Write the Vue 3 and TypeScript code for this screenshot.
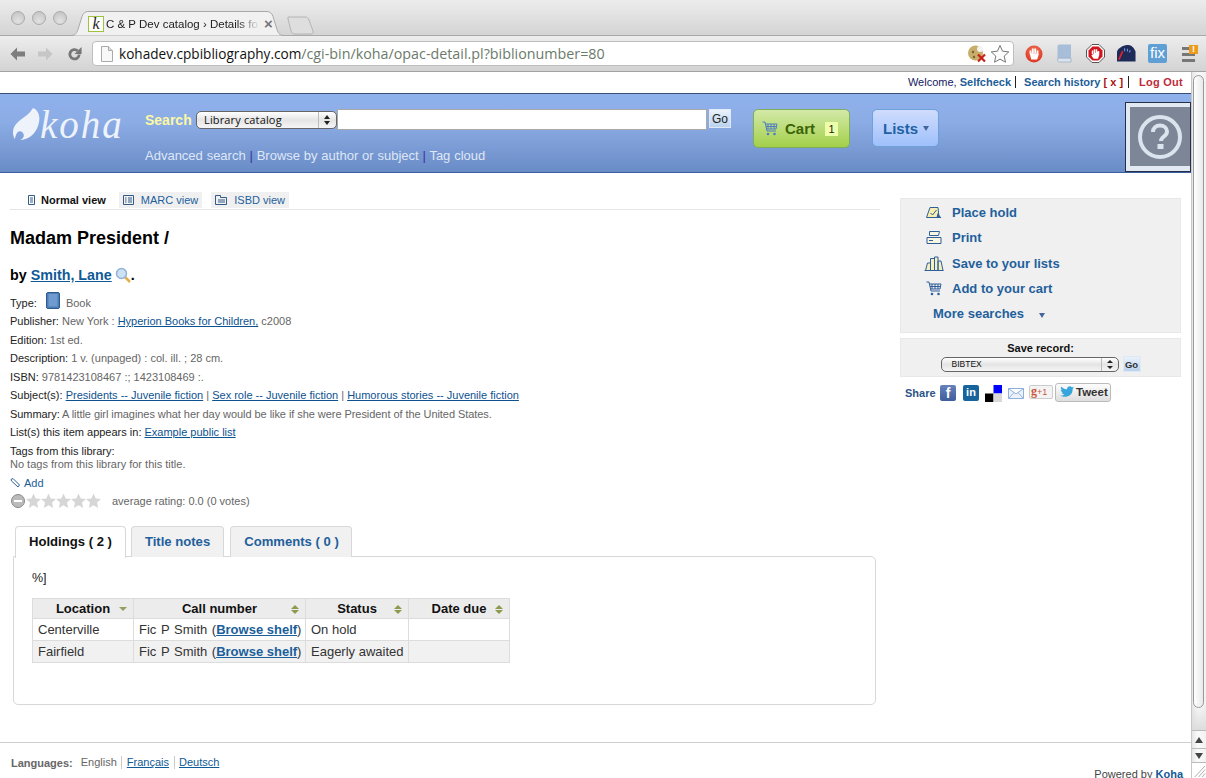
<script setup lang="ts">
const rows = [
  { loc: 'Centerville', status: 'On hold' },
  { loc: 'Fairfield', status: 'Eagerly awaited' },
]
const stars = [0, 1, 2, 3, 4]
</script>

<template>
  <div class="window">
    <header class="chrome">
      <div class="tabstrip">
        <div class="lights"><i></i><i></i><i></i></div>
        <div class="tab">
          <svg class="tabshape" width="215" height="25" viewBox="0 0 215 25"><path d="M0 24.500c5 0 6-1 8-6l4-13c1-3 3-5 6-5h179c3 0 5 2 6 5l4 13c2 5 3 6 8 6" fill="#f1f1f1" stroke="#a9a9a9"/></svg>
          <span class="fav">k</span>
          <span class="tabtitle">C &amp; P Dev catalog › Details fo</span>
          <span class="tabx">×</span>
        </div>
        <svg class="newtab" width="27" height="20" viewBox="0 0 27 20"><path d="M1 1h17c2 0 3 1 4 3l4 11c.5 2-.5 3-2 3H8c-2 0-3-1-4-3L1 3z" fill="#dedede" stroke="#b4b4b4"/></svg>
      </div>
      <div class="toolbar">
        <svg class="nav" width="15" height="14" viewBox="0 0 15 14"><path d="M7 .5 .5 7 7 13.500V9.500h8v-5H7z" fill="#7d7d7d"/></svg>
        <svg class="nav" width="15" height="14" viewBox="0 0 15 14"><path d="M8 .5 14.500 7 8 13.500V9.500H0v-5h8z" fill="#c6c6c6"/></svg>
        <svg class="nav" width="15" height="16" viewBox="0 0 16 16"><path d="M13 8.500a5 5 0 1 1-1.600-3.900" fill="none" stroke="#777" stroke-width="3"/><path d="M15.500 .5v7.500H8z" fill="#777"/></svg>
        <div class="omni">
          <svg width="12" height="16" viewBox="0 0 12 16"><path d="M.5.500h7l4 4v11H.5z" fill="#f8f8f8" stroke="#aaa"/><path d="M7.500.5v4h4" fill="#ddd" stroke="#aaa"/></svg>
          <span class="url"><b>kohadev.cpbibliography.com</b>/cgi-bin/koha/opac-detail.pl?biblionumber=80</span>
          <svg class="cookie" width="20" height="18" viewBox="0 0 20 18"><circle cx="8.500" cy="8" r="7.500" fill="#c8ae6a"/><circle cx="13" cy="4" r="3" fill="#f3f3f3"/><circle cx="6" cy="7" r="1.200" fill="#7a6233"/><circle cx="7" cy="12" r="1.200" fill="#7a6233"/><path d="M11 9.500l7 7m0-7-7 7" stroke="#c8211b" stroke-width="2.200"/></svg>
          <svg width="20" height="19" viewBox="0 0 20 19"><path d="M10 1.500l2.600 5.700 6.200.7-4.600 4.200 1.300 6.100L10 15.100l-5.500 3.100 1.300-6.100L1.200 7.900l6.200-.7z" fill="#fbfbfb" stroke="#777"/></svg>
        </div>
        <div class="exts">
          <svg width="18" height="18" viewBox="0 0 18 18"><defs><radialGradient id="redball" cx=".5" cy=".35" r=".7"><stop offset="0" stop-color="#f47b5e"/><stop offset="1" stop-color="#d92f1d"/></radialGradient></defs><circle cx="9" cy="9" r="8.500" fill="url(#redball)"/><path d="M5.500 8.500V5.500m2.300 2.500V3.500M10.200 8V3.500M12.500 8.500V5.500M5.500 8l1.500 5.500h4.500l1.500-5" stroke="#fff" stroke-width="1.800" fill="#fff"/></svg>
          <svg width="15" height="19" viewBox="0 0 15 19"><path d="M2 .5h12v14H2.500A1.800 1.800 0 0 0 .5 16V2.500A2 2 0 0 1 2 .5z" fill="#a8bed8"/><path d="M.5 16c0-1 .8-1.800 2-1.800H14V18H2.500C1.300 18 .5 17 .5 16z" fill="#dbe4ee" stroke="#8ba3c0" stroke-width=".6"/></svg>
          <svg width="19" height="19" viewBox="0 0 19 19"><path d="M6 .5h7L18.500 6v7L13 18.500H6L.5 13V6z" fill="#fff" stroke="#555"/><path d="M6.500 2.500h6l4 4v6l-4 4h-6l-4-4v-6z" fill="#d2141c"/><path d="M6.500 10V6.500m2-1.200V10m2-4.700V10m2-3V11l-1 3H8L6 11" stroke="#fff" stroke-width="1.500" fill="#fff"/></svg>
          <svg width="19" height="19" viewBox="0 0 20 19"><path d="M0 18V7C3 2 8 .5 12 .5c3 0 6 3 7.500 7V18z" fill="#1e2a58"/><path d="M2 16 6 7" stroke="#e2232a" stroke-width="1.800"/><path d="M8 4v3m3-2.500v3m3-1.500-1 2.500" stroke="#6f93d8" stroke-width="1.200"/></svg>
          <span class="fix">fix</span>
          <span class="menu"><i></i><i></i><i></i><em>!</em></span>
        </div>
      </div>
    </header>

    <div class="page">
      <main class="site">
        <div class="userbar">
          <span>Welcome, <a class="bold">Selfcheck</a></span>
          <span class="sep"><a class="bold">Search history</a> <span class="xlink">[ x ]</span></span>
          <span class="sep logout">Log Out</span>
        </div>

        <div class="masthead">
          <div class="logo">
            <svg width="28" height="32" viewBox="0 0 28 32"><path d="M21 0C27 2 29 10 26 18 23 27 15 32 8 32 11 31 13 28 11 25 9 22 5 23 4 27 3 29 3 31 3 31 0 27 0 20 5 15 11 9 16 8 21 0z" fill="#eef3fb"/></svg>
            <span>koha</span>
          </div>
          <div class="searcharea">
            <div class="searchrow">
              <label>Search</label>
              <div class="select libsel"><span>Library catalog</span><em></em></div>
              <div class="query"></div>
              <button class="go">Go</button>
            </div>
            <div class="searchlinks">Advanced search <u>|</u> Browse by author or subject <u>|</u> Tag cloud</div>
          </div>
          <div class="cartbtn">
            <svg class="carticon" width="16" height="15" viewBox="0 0 16 15"><path d="M.5 1h2.500l2 9h9M3.500 3H15l-1 5H5M6 3v5m3-5v5m3-5v5M4 5.500h10.500" fill="none" stroke="#4f7cc0"/><circle cx="6" cy="13" r="1.300" fill="#4f7cc0"/><circle cx="12.500" cy="13" r="1.300" fill="#4f7cc0"/></svg>
            <span class="carttext">Cart</span>
            <span class="count">1</span>
          </div>
          <div class="listsbtn">Lists <i class="caret"></i></div>
          <div class="helpbox">
            <div class="helpinner">
              <svg width="44" height="44" viewBox="0 0 44 44"><circle cx="22" cy="22" r="20" fill="none" stroke="#dbe3ee" stroke-width="4"/><path d="M15 17c0-4 3-6.500 7-6.500s7 2.500 7 6c0 5-6 5-6 9.500" fill="none" stroke="#dbe3ee" stroke-width="4"/><rect x="19.500" y="29" width="6" height="5" fill="#dbe3ee"/></svg>
            </div>
          </div>
        </div>

        <div class="content">
          <section class="record">
            <nav class="views">
              <span class="view current">
                <svg width="9" height="10" viewBox="0 0 9 10"><path d="M1.500.5h6v9h-6zM3 3h3M3 5h3M3 7h3" fill="none" stroke="#345a8a"/></svg>Normal view
              </span>
              <span class="view">
                <svg width="11" height="10" viewBox="0 0 11 10"><path d="M.5.500h10v9H.5zM2 3h1.500M5 3h4M2 5h1.500M5 5h4M2 7h1.500M5 7h4" fill="none" stroke="#345a8a"/></svg>MARC view
              </span>
              <span class="view">
                <svg width="12" height="10" viewBox="0 0 12 10"><path d="M.5.500h5v2h6v7H.5zM3 5h7M3 7h7" fill="none" stroke="#345a8a"/></svg>ISBD view
              </span>
            </nav>

            <h1>Madam President /</h1>
            <h2>by <a>Smith, Lane</a>
              <svg class="mag" width="16" height="16" viewBox="0 0 16 16"><path d="M9.500 9.500 15 15" stroke="#e0b04a" stroke-width="2.500"/><circle cx="6.500" cy="6.500" r="5" fill="#cfe0f2" stroke="#8fb2d8" stroke-width="1.500"/></svg><span class="dot">.</span>
            </h2>

            <div class="meta">
              <p class="typerow"><span class="lbl">Type:</span>
                <svg width="14" height="17" viewBox="0 0 14 17"><rect x=".5" y=".5" width="13" height="16" rx="1.500" fill="#4d7db6" stroke="#2f5a90"/><rect x="2.500" y="2" width="9" height="12.500" fill="#6f9bd0"/></svg>
                <span class="bookw">Book</span></p>
              <p><span class="lbl">Publisher:</span> New York : <a>Hyperion Books for Children,</a> c2008</p>
              <p><span class="lbl">Edition:</span> 1st ed.</p>
              <p><span class="lbl">Description:</span> 1 v. (unpaged) : col. ill. ; 28 cm.</p>
              <p><span class="lbl">ISBN:</span> 9781423108467 :; 1423108469 :.</p>
              <p><span class="lbl">Subject(s):</span> <a>Presidents -- Juvenile fiction</a> | <a>Sex role -- Juvenile fiction</a> | <a>Humorous stories -- Juvenile fiction</a></p>
              <p class="summary"><span class="lbl">Summary:</span> A little girl imagines what her day would be like if she were President of the United States.</p>
              <p><span class="lbl">List(s) this item appears in:</span> <a>Example public list</a></p>
            </div>

            <div class="tags">
              <div class="lbl">Tags from this library:</div>
              <div>No tags from this library for this title.</div>
            </div>
            <div class="addtag">
              <svg width="11" height="10" viewBox="0 0 11 10"><path d="M1 1.500 3 .5l6.500 6.500-1.500 2L1.500 3z" fill="#fff" stroke="#2f5f96"/></svg>
              <span>Add</span>
            </div>
            <div class="rating">
              <span class="minus"><i></i></span>
              <svg v-for="s in stars" :key="s" class="star" width="15" height="16" viewBox="0 0 15 16"><path d="M7.500.5l2.200 5 5.300.6-4 3.500 1.200 5.400-4.700-2.800L2.800 15 4 9.600 0 6.100l5.300-.6z" fill="#d6d6d6"/></svg>
              <span class="avg">average rating: 0.0 (0 votes)</span>
            </div>

            <div class="tabs">
              <span class="t active">Holdings ( 2 )</span>
              <span class="t">Title notes</span>
              <span class="t">Comments ( 0 )</span>
            </div>
            <div class="panel">
              <div class="pct">%]</div>
              <table>
                <colgroup><col class="c1" /><col class="c2" /><col class="c3" /><col class="c4" /></colgroup>
                <thead>
                  <tr>
                    <th><span>Location</span><i class="down"></i></th>
                    <th><span>Call number</span><i class="both"></i></th>
                    <th><span>Status</span><i class="both"></i></th>
                    <th><span>Date due</span><i class="both"></i></th>
                  </tr>
                </thead>
                <tbody>
                  <tr v-for="(r, i) in rows" :key="r.loc" :class="{ odd: i === 1 }">
                    <td>{{ r.loc }}</td>
                    <td>Fic P Smith (<a>Browse shelf</a>)</td>
                    <td>{{ r.status }}</td>
                    <td></td>
                  </tr>
                </tbody>
              </table>
            </div>
          </section>

          <aside class="side">
            <div class="actions">
              <div class="act">
                <svg width="17" height="13" viewBox="0 0 17 13"><path d="M1 11.500 4.500 1.500h8l1 10z" fill="#f7eeb0" stroke="#2e5f99"/><path d="M5 7l2 2 4-5" fill="none" stroke="#2e5f99"/><path d="M12 7l4 5h-5z" fill="#2e5f99"/></svg>
                <a>Place hold</a>
              </div>
              <div class="act">
                <svg width="16" height="14" viewBox="0 0 16 14"><path d="M3.500.5h10l-1 4h-9zM1 6.500h14v6H1zM3 9.500h4" fill="#f8f6e0" stroke="#2e5f99"/></svg>
                <a>Print</a>
              </div>
              <div class="act">
                <svg width="19" height="15" viewBox="0 0 19 15"><path d="M1 14.500 3 7h3v7.500M6 14.500V2.500h4v12M10 14.500V1h3.500v13.500M13.500 14.500V5h3l2 9.500M0 14.500h19" fill="#f4efc0" stroke="#2e5f99"/></svg>
                <a>Save to your lists</a>
              </div>
              <div class="act">
                <svg width="16" height="15" viewBox="0 0 16 15"><path d="M.5 1h2.500l2 9h9M3.500 3H15l-1 5H5M6 3v5m3-5v5m3-5v5M4 5.500h10.500" fill="none" stroke="#2e5f99"/><circle cx="6" cy="13" r="1.300" fill="#2e5f99"/><circle cx="12.500" cy="13" r="1.300" fill="#2e5f99"/></svg>
                <a>Add to your cart</a>
              </div>
              <div class="more"><a>More searches</a><i class="caret"></i></div>
            </div>
            <div class="saverec">
              <div class="savelabel">Save record:</div>
              <div class="saveline">
                <div class="select bibsel"><span>BIBTEX</span><em></em></div>
                <button class="go small">Go</button>
              </div>
            </div>
            <div class="share">
              <span class="sharelbl">Share</span>
              <span class="soc fb">f</span>
              <span class="soc li">in</span>
              <svg class="del" width="17" height="17" viewBox="0 0 17 17"><rect x="8.500" width="8.500" height="8.500" fill="#00f"/><rect y="8.500" width="8.500" height="8.500" fill="#000"/><rect x="8.500" y="8.500" width="8.500" height="8.500" fill="#d8d8d8"/></svg>
              <svg class="mail" width="16" height="11" viewBox="0 0 16 11"><path d="M.5.500h15v10H.5zM.5.500 8 6l7.500-5.500M.5 10.500 6 4.500m9.500 6L10 4.500" fill="#eef3fb" stroke="#8fb0dc"/></svg>
              <span class="gplus"><b>g</b>+1</span>
              <span class="tweet">
                <svg width="14" height="12" viewBox="0 0 14 12"><path d="M14 1.500c-.5.300-1 .4-1.600.5.600-.4 1-.9 1.200-1.500-.5.300-1.100.5-1.800.7A2.800 2.800 0 0 0 7 3.300C4.700 3.200 2.600 2.100 1.200.4.500 1.700.8 3.300 2.100 4.200c-.5 0-.9-.1-1.300-.4 0 1.400 1 2.500 2.300 2.800-.4.100-.9.100-1.300 0 .4 1.100 1.400 1.900 2.700 2-1.300 1-2.900 1.400-4.500 1.200C5.800 12.500 13 10 12.600 3c.6-.4 1-.9 1.400-1.500z" fill="#35a5dc"/></svg>
                Tweet
              </span>
            </div>
          </aside>
        </div>

        <footer class="foot">
          <div class="langs">
            <span class="langlbl">Languages:</span>
            <span class="lang">English</span>
            <a class="lang">Français</a>
            <a class="lang">Deutsch</a>
          </div>
          <div class="powered">Powered by <b>Koha</b></div>
        </footer>
      </main>

      <div class="scrollbar">
        <div class="track"><div class="thumb"></div></div>
        <div class="arrow"><i class="up"></i></div>
        <div class="arrow"><i class="dn"></i></div>
        <svg class="grip" width="14" height="15" viewBox="0 0 15 16"><path d="M3 15 14 3M7 15l7-8M11 15l3-4" stroke="#aaa" fill="none"/></svg>
      </div>
    </div>
  </div>
</template>

<style>
html, body { margin: 0; overflow: hidden; background: #fff; }
</style>

<style scoped>
.window { width: 1206px; height: 778px; overflow: hidden; display: flex; flex-direction: column; font-family: "Liberation Sans", Arial, sans-serif; font-size: 11px; color: #666; }
a { color: #0f5a96; }

.chrome { flex: none; height: 72px; box-sizing: border-box; border-bottom: 1px solid #a3a3a3; }
.tabstrip { height: 36px; display: flex; background: linear-gradient(#ececec, #d4d4d4); position: relative; box-sizing: border-box; border-bottom: 1px solid #a9a9a9; }
.lights { display: flex; gap: 7px; padding: 11px 0 0 11px; width: 70px; box-sizing: border-box; flex: none; }
.lights i { width: 14px; height: 14px; border-radius: 50%; background: radial-gradient(circle at 50% 75%, #e2e2e2, #c0c0c0); border: 1px solid #aaa; box-sizing: border-box; flex: none; }
.tab { width: 215px; height: 25px; margin: 11px 0 0 0; position: relative; display: flex; align-items: center; flex: none; }
.tabshape { position: absolute; left: 0; top: 0; }
.fav { position: relative; width: 16px; height: 16px; margin-left: 18px; border: 1px solid #9fc33e; box-sizing: border-box; background: #fff; font: italic 16px/14px "Liberation Serif", serif; color: #222; text-align: center; flex: none; }
.tabtitle { position: relative; margin-left: 2px; font-size: 11.500px; color: #222; width: 154px; flex: none; white-space: nowrap; overflow: hidden; -webkit-mask-image: linear-gradient(90deg, #000 85%, transparent); mask-image: linear-gradient(90deg, #000 85%, transparent); }
.tabx { position: relative; color: #777; font-size: 15px; line-height: 15px; margin-left: 4px; font-weight: 700; }
.newtab { margin: 16px 0 0 2px; }
.toolbar { height: 35px; display: flex; align-items: center; background: linear-gradient(#ededed, #d3d3d3); padding-left: 10px; box-sizing: border-box; }
.nav { flex: none; margin-right: 13px; }
.nav + .nav { margin-right: 14px; }
.nav + .nav + .nav { margin-right: 10px; }
.omni { width: 922px; height: 25px; background: #fff; border: 1px solid #bdbdbd; border-radius: 4px; box-sizing: border-box; display: flex; align-items: center; padding: 0 3px 0 8px; flex: none; }
.url { flex: 1; margin-left: 6px; font: 14.300px "Open Sans", "DejaVu Sans", sans-serif; color: #6c7a6c; white-space: nowrap; }
.url b { font-weight: 400; font-size: 13.600px; color: #111; }
.cookie { margin-right: 3px; }
.exts { display: flex; align-items: center; flex: 1; padding-left: 11px; gap: 14px; }
.exts svg:nth-child(4) { margin-left: -2px; }
.fix { width: 19px; height: 19px; margin-left: -2px; background: #5f9fd4; color: #fff; font-size: 15px; line-height: 18px; text-align: center; border-radius: 2px; }
.menu { width: 16px; height: 17px; display: flex; flex-direction: column; gap: 3px; justify-content: flex-end; position: relative; margin-left: 1px; }
.menu i { height: 3px; background: #777; width: 13px; }
.menu em { position: absolute; right: 0; top: 0; width: 9px; height: 9px; background: #ec9c1c; color: #fff; font: bold 9px/9px "Liberation Sans", sans-serif; text-align: center; }

.page { flex: 1; display: flex; min-height: 0; }
.site { width: 1191px; flex: none; display: flex; flex-direction: column; min-height: 0; position: relative; }

.userbar { height: 21px; padding-bottom: 2px; box-sizing: border-box; display: flex; justify-content: flex-end; align-items: center; padding-right: 8px; color: #14205e; font-size: 11px; }
.userbar a.bold { color: #1d5d98; font-weight: 700; }
.userbar .sep { margin-left: 4px; border-left: 1px solid #222; padding-left: 8px; line-height: 12px; }
.xlink { color: #a11; font-weight: 700; }
.logout { color: #c02a3a; font-weight: 700; letter-spacing: .25px; padding-left: 10px !important; margin-left: 5px !important; }

.masthead { height: 80px; box-sizing: border-box; border-top: 1px solid #3a4f78; border-bottom: 1px solid #3c5fa2; background: linear-gradient(#8fb1ec 0%, #8cacE5 35%, #6a8cc6 100%); display: flex; position: relative; }
.logo { width: 145px; flex: none; box-sizing: border-box; padding: 14px 0 0 12px; display: flex; align-items: flex-start; color: #eef3fb; }
.logo span { font: italic 39px/34px "Liberation Serif", serif; letter-spacing: 2px; margin-left: 0; }
.searcharea { width: 608px; flex: none; }
.searchrow { display: flex; align-items: center; height: 23px; margin-top: 14px; }
.searchrow label { font-size: 14px; font-weight: 700; color: #fbf8a5; width: 51px; flex: none; }
.select { position: relative; background: linear-gradient(#fff, #e4e4e4 50%, #f5f5f5); border: 1px solid #666; box-sizing: border-box; border-radius: 5px; color: #111; white-space: nowrap; }
.select em { position: absolute; right: 0; top: 0; bottom: 0; width: 17px; border-left: 1px solid #bbb; }
.select em::before, .select em::after { content: ""; position: absolute; left: 5px; border-left: 3px solid transparent; border-right: 3px solid transparent; }
.select em::before { top: 3px; border-bottom: 4px solid #222; }
.select em::after { bottom: 3px; border-top: 4px solid #222; }
.libsel { width: 141px; height: 18px; font-size: 11px; line-height: 16px; padding-left: 7px; letter-spacing: .15px; font-family: "Open Sans", sans-serif; }
.query { width: 370px; height: 21px; background: #fff; border: 1px solid #a9a9a9; box-sizing: border-box; }
.go { margin-left: 2px; width: 22px; height: 19px; padding: 0; border: 1px solid #e0e8f5; background: linear-gradient(#eaf2fb, #b9d2ee); font: 12px "Liberation Sans", sans-serif; color: #222; margin-top: -2px; }
.searchlinks { margin-top: 17px; font-size: 13px; color: #dfe7f6; white-space: nowrap; word-spacing: .2px; }
.searchlinks u { color: #3636a0; text-decoration: none; }
.cartbtn { width: 97px; height: 39px; margin-top: 15px; box-sizing: border-box; border: 1px solid #7eae5a; border-radius: 5px; background: linear-gradient(#d3e9a8, #a3d04a); display: flex; align-items: center; flex: none; padding-left: 8px; }
.carttext { font-size: 15px; font-weight: 700; color: #3b6406; margin-left: 7px; }
.count { width: 13px; height: 14px; background: #eeffaa; color: #222; font-size: 11px; line-height: 14px; text-align: center; margin-left: 10px; }
.listsbtn { width: 67px; height: 38px; margin: 15px 0 0 22px; box-sizing: border-box; border: 1px solid #6ea0dc; border-radius: 5px; background: linear-gradient(#cfdcfd, #9fc0fb); display: flex; align-items: center; padding-left: 10px; font-size: 15px; font-weight: 700; color: #1e62a4; flex: none; }
.caret { display: inline-block; width: 0; height: 0; border-left: 3px solid transparent; border-right: 3px solid transparent; border-top: 5px solid #44669c; margin-left: 5px; }
.helpbox { position: absolute; right: 0; top: 8px; width: 66px; height: 70px; box-sizing: border-box; border: 1px solid #24304a; background: #e3e9f3; padding: 4px 0 5px 4px; }
.helpinner { background: #7c8696; height: 100%; display: flex; align-items: center; justify-content: center; }

.content { flex: 1; min-height: 0; display: flex; padding: 19px 0 0 10px; }
.record { width: 870px; flex: none; }
.views { display: flex; height: 17px; border-bottom: 1px solid #e6e6e6; padding-left: 17px; gap: 9px; }
.view { height: 16px; padding: 0 4px 0 4px; display: flex; align-items: center; gap: 7px; background: #f0f0f0; color: #1f609c; font-size: 11px; }
.view.current { background: none; color: #111; font-weight: 700; gap: 5px; padding-left: 0; }

h1 { margin: 18px 0 0; font-size: 18px; line-height: 21px; color: #000; font-weight: 700; }
h2 { margin: 17px 0 0; font-size: 14.300px; line-height: 18px; color: #000; font-weight: 700; display: flex; align-items: center; }
h2 a { margin-left: 4px; text-decoration: underline; }
.mag { margin-left: 3px; }
.meta { margin-top: 10px; }
.meta p { margin: 0; line-height: 18.500px; white-space: nowrap; }
.meta a { text-decoration: underline; color: #0d5290; }
.summary { letter-spacing: -.06px; }
.lbl { color: #222; }
.meta .typerow { display: flex; align-items: center; height: 18px; }
.typerow svg { margin: -5px 0 0 9px; }
.bookw { margin-left: 6px; }
.tags { margin-top: 3px; line-height: 13px; }
.addtag { display: flex; align-items: center; gap: 3px; margin-top: 6px; color: #1d5d98; height: 13px; }
.rating { display: flex; align-items: center; margin-top: 2px; height: 18px; padding-left: 1px; }
.minus { width: 14px; height: 14px; border-radius: 50%; background: #bbb; border: 1px solid #888; box-sizing: border-box; display: flex; align-items: center; justify-content: center; margin-right: 1px; }
.minus i { width: 8px; height: 2px; background: #fff; }
.star { flex: none; }
.avg { margin-left: 11px; }
.tabs { display: flex; margin: 16px 0 0 5px; gap: 5px; position: relative; z-index: 1; height: 31px; }
.t { height: 30px; padding: 0 13px; background: #f1f1f1; border: 1px solid #d8d8d8; border-bottom: none; border-radius: 4px 4px 0 0; font-size: 13.100px; font-weight: 700; color: #1f609c; line-height: 29px; }
.t.active { height: 31px; background: #fff; color: #111; }
.t:last-child { margin-left: 1px; padding-right: 12px; }
.panel { margin: -1px 0 0 3px; height: 149px; box-sizing: border-box; width: 863px; border: 1px solid #d8d8d8; border-radius: 0 5px 5px 5px; padding: 14px 0 0 18px; color: #222; }
.pct { font-size: 12.500px; line-height: 14px; }
table { margin-top: 13px; border-collapse: collapse; width: 477px; table-layout: fixed; font-size: 13px; color: #333; word-spacing: 1px; }
.c1 { width: 101px; } .c2 { width: 172px; } .c3 { width: 103px; } .c4 { width: 101px; }
th, td { border: 1px solid #dcdcdc; white-space: nowrap; }
th { height: 20px; background: #ececec; color: #111; font-weight: 700; position: relative; padding: 0; text-align: center; box-sizing: border-box; word-spacing: 0; }
td { height: 22px; padding: 0 0 0 5px; box-sizing: border-box; }
td:nth-child(3) { word-spacing: 0; }
td a { font-weight: 700; text-decoration: underline; color: #1a5f9c; word-spacing: 0; }
.odd td { background: #f1f1f1; }
th i { position: absolute; right: 6px; top: 6px; width: 8px; height: 9px; }
.down::after { content: ""; position: absolute; top: 2px; left: 0; border-left: 4px solid transparent; border-right: 4px solid transparent; border-top: 4px solid #9a9d60; }
.both::before, .both::after { content: ""; position: absolute; left: 0; border-left: 4px solid transparent; border-right: 4px solid transparent; }
.both::before { top: 0; border-bottom: 4px solid #8d9a4e; }
.both::after { top: 5px; border-top: 4px solid #8d9a4e; }

.side { width: 281px; margin-left: 20px; padding-top: 6px; flex: none; }
.actions { height: 135px; box-sizing: border-box; background: #f0f0f0; border: 1px solid #e8e8e8; padding: .4px 0 0 0; }
.act { height: 25.500px; display: flex; align-items: center; }
.act svg { width: 20px; margin-left: 23px; flex: none; }
.act a, .more a { font-size: 13px; font-weight: 700; color: #1f609c; }
.act a { margin-left: 8px; }
.more { height: 25px; display: flex; align-items: center; padding-left: 32px; }
.more .caret { margin: 3px 0 0 15px; }
.saverec { margin-top: 5px; height: 39px; box-sizing: border-box; background: #f0f0f0; border: 1px solid #e8e8e8; text-align: center; padding-top: 3px; }
.savelabel { font-size: 11px; font-weight: 700; color: #111; line-height: 13px; }
.saveline { display: flex; justify-content: center; align-items: center; margin-top: 1px; }
.bibsel { width: 178px; height: 15px; font-size: 8.500px; line-height: 13px; text-align: left; padding-left: 10px; }
.bibsel em { width: 16px; }
.bibsel em::before { top: 2px; border-bottom-width: 3px; }
.bibsel em::after { bottom: 2px; border-top-width: 3px; }
.go.small { margin: 0 0 0 4px; width: 18px; height: 16px; font-size: 9.500px; font-weight: 700; color: #333; }
.share { display: flex; align-items: center; margin-top: 6px; height: 20px; padding-left: 5px; }
.sharelbl { font-weight: 700; color: #2d5488; width: 35px; }
.soc { width: 16px; height: 16px; border-radius: 2px; color: #fff; font-weight: 700; text-align: center; box-sizing: border-box; }
.fb { background: linear-gradient(#6582bb, #3f5c9c); font-size: 14px; line-height: 17px; margin-right: 7px; }
.li { background: #17639c; font-size: 11px; line-height: 15px; margin-right: 6px; }
.del { margin-right: 6px; flex: none; }
.mail { margin-right: 5px; flex: none; }
.gplus { width: 24px; height: 14px; box-sizing: border-box; border: 1px solid #ccc; border-radius: 2px; background: #f4f4f4; color: #c8553a; font-size: 9px; line-height: 12px; padding-left: 1px; margin: -3px 2px 0 0; }
.gplus b { font: bold 12px/10px "Liberation Serif", serif; }
.tweet { height: 19px; width: 56px; box-sizing: border-box; border: 1px solid #bbb; border-radius: 3px; background: linear-gradient(#fdfdfd, #dedede); display: flex; align-items: center; gap: 2px; padding-left: 4px; font-weight: 700; color: #333; font-size: 11.500px; margin-top: -2px; }

.foot { flex: none; height: 35px; border-top: 1px solid #cfcfcf; position: relative; overflow: hidden; }
.langs { display: flex; align-items: center; height: 13px; margin-top: 13px; padding-left: 11px; }
.langlbl { font-weight: 700; color: #666; margin-right: 8px; font-size: 11px; }
.lang { font-size: 11px; padding: 0 4.500px; border-left: 1px solid #ccc; line-height: 13px; }
.langlbl + .lang { border-left: none; padding-left: 0; }
a.lang { text-decoration: underline; }
.powered { position: absolute; right: 8px; top: 25px; color: #444; font-size: 11px; white-space: nowrap; }
.powered b { color: #0f5a96; }

.scrollbar { width: 15px; flex: none; display: flex; flex-direction: column; border-left: 1px solid #c7c7c7; box-sizing: border-box; background: linear-gradient(90deg, #e6e6e6, #fafafa 40%, #f2f2f2); position: relative; }
.track { height: 658px; padding: 3px 0 0 1px; box-sizing: border-box; flex: none; background: linear-gradient(#0000 96%, #dcdcdc); }
.thumb { width: 11px; height: 633px; box-sizing: border-box; border: 1px solid #999; border-radius: 6px; background: linear-gradient(90deg, #fff, #e9e9e9); }
.arrow { height: 18px; flex: none; border-top: 1px solid #bbb; box-sizing: border-box; display: flex; align-items: center; justify-content: center; }
.arrow:nth-child(3) { border-bottom: 1px solid #bbb; height: 15px; }
.arrow i { border-left: 4px solid transparent; border-right: 4px solid transparent; }
.arrow .up { border-bottom: 6px solid #444; }
.arrow .dn { border-top: 6px solid #444; }
.grip { background: #fff; flex: 1; width: 14px; }
</style>
